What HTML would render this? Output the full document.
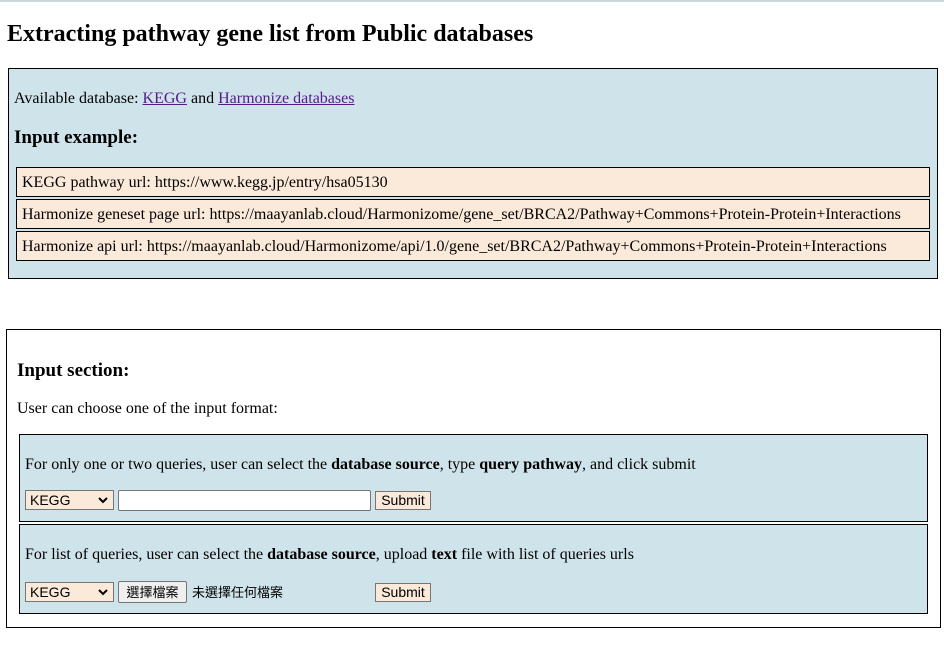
<!DOCTYPE html>
<html><head><meta charset="utf-8"><style>
*{margin:0;padding:0;box-sizing:border-box}
body{width:944px;height:654px;background:#fff;position:relative;font-family:"Liberation Serif",serif;font-size:16px;color:#000;overflow:hidden}
.a{position:absolute;white-space:nowrap}
.bx{position:absolute;border:1px solid #000}
.blue{background:#cfe3ea}
.row{position:absolute;left:16px;width:914px;height:30px;background:#fbead9;border:1px solid #000;padding-left:5px;line-height:29px;white-space:nowrap}
a{color:#551a8b;text-decoration:underline}
.sel{position:absolute;width:89px;height:20px;background:#fbead9;border:1px solid #767676;font:14px "Liberation Sans",sans-serif;line-height:18px;padding-left:4px}
.sel svg{position:absolute;right:5px;top:6px}
.btn{position:absolute;background:#fbead9;border:1px solid #767676;font:14px "Liberation Sans",sans-serif;text-align:center;line-height:16px}
</style></head><body>
<div class="a" style="left:0;top:0;width:944px;height:2px;background:#c9d9d9"></div>
<div class="a" style="left:7px;top:21px;font-size:24px;font-weight:bold">Extracting pathway gene list from Public databases</div>
<div class="bx blue" style="left:8px;top:68px;width:930px;height:211px"></div>
<div class="a" style="left:14px;top:90px">Available database: <a>KEGG</a> and <a>Harmonize databases</a></div>
<div class="a" style="left:14px;top:127px;font-size:19px;font-weight:bold">Input example:</div>
<div class="row" style="top:167px">KEGG pathway url: https://www.kegg.jp/entry/hsa05130</div>
<div class="row" style="top:199px">Harmonize geneset page url: https://maayanlab.cloud/Harmonizome/gene_set/BRCA2/Pathway+Commons+Protein-Protein+Interactions</div>
<div class="row" style="top:231px">Harmonize api url: https://maayanlab.cloud/Harmonizome/api/1.0/gene_set/BRCA2/Pathway+Commons+Protein-Protein+Interactions</div>

<div class="bx" style="left:6px;top:329px;width:935px;height:299px"></div>
<div class="a" style="left:17px;top:360px;font-size:19px;font-weight:bold">Input section:</div>
<div class="a" style="left:17px;top:400px">User can choose one of the input format:</div>

<div class="bx blue" style="left:19px;top:434px;width:909px;height:88px"></div>
<div class="a" style="left:25px;top:456px">For only one or two queries, user can select the <b>database source</b>, type <b>query pathway</b>, and click submit</div>
<div class="sel" style="left:25px;top:490px">KEGG<svg width="10" height="7" viewBox="0 0 10 7"><path d="M1 1l4 4 4-4" stroke="#000" stroke-width="2" fill="none"/></svg></div>
<div class="a" style="left:118px;top:490px;width:253px;height:21px;background:#fff;border:1px solid #767676;border-radius:2px"></div>
<div class="btn" style="left:375px;top:491px;width:56px;height:19px">Submit</div>

<div class="bx blue" style="left:19px;top:524px;width:909px;height:90px"></div>
<div class="a" style="left:25px;top:546px">For list of queries, user can select the <b>database source</b>, upload <b>text</b> file with list of queries urls</div>
<div class="sel" style="left:25px;top:582px">KEGG<svg width="10" height="7" viewBox="0 0 10 7"><path d="M1 1l4 4 4-4" stroke="#000" stroke-width="2" fill="none"/></svg></div>
<div class="btn" style="left:118px;top:581px;width:69px;height:22px;background:#efefef;border-radius:2px;line-height:20px;font-family:'Noto Sans CJK TC',sans-serif;font-size:13px">選擇檔案</div>
<div class="a" style="left:192px;top:583px;font-family:'Noto Sans CJK TC',sans-serif;font-size:13px;line-height:18px">未選擇任何檔案</div>
<div class="btn" style="left:375px;top:583px;width:56px;height:19px">Submit</div>
</body></html>
